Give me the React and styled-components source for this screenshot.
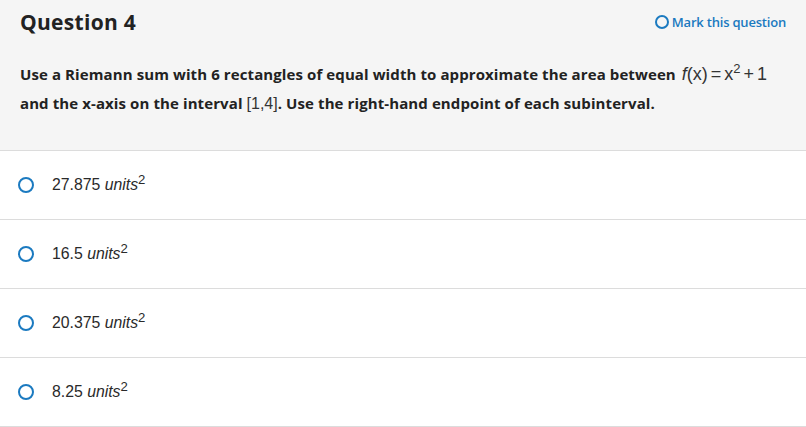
import React from 'react';
import styled, { createGlobalStyle } from 'styled-components';

const GlobalStyle = createGlobalStyle`
  html, body {
    margin: 0;
    padding: 0;
    background: #ffffff;
  }
`;

const Page = styled.div`
  width: 806px;
`;

const Header = styled.div`
  background: #f5f5f5;
  padding: 9px 20px 0 20px;
  height: 151px;
  box-sizing: border-box;
  border-bottom: 1px solid #dcdcdc;
`;

const TopRow = styled.div`
  display: flex;
  justify-content: space-between;
  align-items: center;
`;

const Title = styled.h2`
  margin: 0;
  font-family: 'Open Sans', 'Liberation Sans', sans-serif;
  font-weight: 700;
  font-size: 21px;
  letter-spacing: 0.3px;
  color: #222;
  line-height: 26px;
`;

const MarkButton = styled.button`
  display: flex;
  align-items: center;
  gap: 3px;
  background: none;
  border: none;
  padding: 0;
  font-family: 'Open Sans', 'Liberation Sans', sans-serif;
  font-weight: 600;
  font-size: 13px;
  letter-spacing: -0.2px;
  color: #1b7ac0;
  cursor: pointer;
`;

const Circle = styled.span`
  display: inline-block;
  flex-shrink: 0;
  width: ${({ size }) => size}px;
  height: ${({ size }) => size}px;
  box-sizing: border-box;
  border: 2px solid #1b7ac0;
  border-radius: 50%;
`;

const Prompt = styled.p`
  margin: 25px 0 0 0;
  font-family: 'Open Sans', 'Liberation Sans', sans-serif;
  font-weight: 700;
  font-size: 15px;
  letter-spacing: 0.1px;
  line-height: 29px;
  color: #222;
`;

const MathExpr = styled.span`
  margin-left: 2px;
  font-family: 'Liberation Sans', sans-serif;
  font-weight: 400;
  font-size: 18px;
  line-height: 0;
  letter-spacing: 0;
  color: #333;

  sup {
    font-size: 13px;
  }
`;

const Op = styled.span`
  margin: 0 3px;
`;

const Thin = styled.span`
  font-family: 'Liberation Sans', sans-serif;
  font-weight: 400;
  font-size: 16px;
  letter-spacing: 0;
  color: #333;
`;

const Options = styled.ul`
  list-style: none;
  margin: 0;
  padding: 0;
`;

const Option = styled.li`
  display: flex;
  align-items: center;
  gap: 18px;
  height: 69px;
  box-sizing: border-box;
  padding: 0 0 0 18px;
  border-bottom: 1px solid #dcdcdc;
`;

const Answer = styled.span`
  font-family: 'Liberation Sans', Arial, sans-serif;
  font-size: 15.8px;
  color: #2a2a2a;
  margin-top: -4px;
`;

const Unit = styled.i`
  font-style: italic;
`;

const answers = ['27.875', '16.5', '20.375', '8.25'];

const App = () => {
  return (
    <Page>
      <GlobalStyle />
      <Header>
        <TopRow>
          <Title>Question 4</Title>
          <MarkButton>
            <Circle size={14} />
            Mark this question
          </MarkButton>
        </TopRow>
        <Prompt>
          Use a Riemann sum with 6 rectangles of equal width to approximate the area between{' '}
          <MathExpr>
            <i>f</i>(x)<Op>=</Op>x<sup>2</sup>
            <Op>+</Op>1
          </MathExpr>
          <br />
          and the x-axis on the interval <Thin>[1,4]</Thin>. Use the right-hand endpoint of each subinterval.
        </Prompt>
      </Header>
      <Options>
        {answers.map((a) => (
          <Option key={a}>
            <Circle size={16} />
            <Answer>
              {a} <Unit>units</Unit>
              <sup>2</sup>
            </Answer>
          </Option>
        ))}
      </Options>
    </Page>
  );
};

export default App;
